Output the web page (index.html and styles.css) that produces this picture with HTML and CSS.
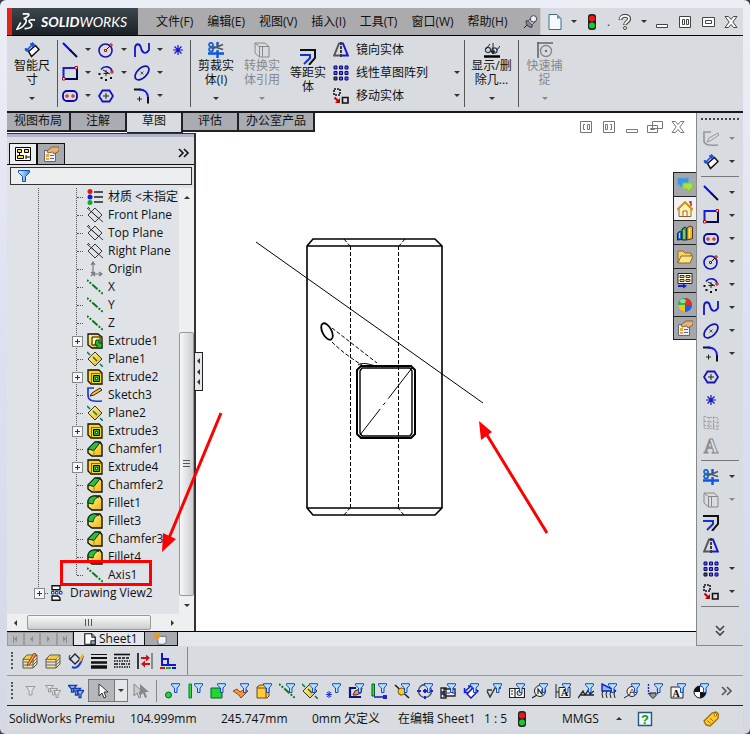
FILE: index.html
```html
<!DOCTYPE html>
<html lang="zh-CN">
<head>
<meta charset="utf-8">
<title>SolidWorks</title>
<link rel="stylesheet" href="styles.css">
</head>
<body>
<svg class="paints" aria-hidden="true">
<defs>
<linearGradient id="gy" x1="0" y1="0" x2="1" y2="1"><stop offset="0" stop-color="#fff7a8"/><stop offset="1" stop-color="#f2b400"/></linearGradient>
<linearGradient id="gb" x1="0" y1="0" x2="1" y2="0"><stop offset="0" stop-color="#e8f6ff"/><stop offset="1" stop-color="#2a86e0"/></linearGradient>
</defs>
</svg>
<svg class="sprite" aria-hidden="true">
<symbol id="dim" viewBox="0 0 16 16"><path d="M4.500 9.500l7-6 3.500 4-7.500 7z" fill="#fff" stroke="#111" stroke-width="1.500"/><path d="M2.500 8.500L9 2M1 6.500l2.500 3M8 .5L10.500 3M2 9l0-3M2 9l3-.5M9 2H6M9 2v3" stroke="#1b4fe0" stroke-width="1.600" fill="none"/></symbol>
<symbol id="line" viewBox="0 0 16 16"><path d="M1 1l8 8" stroke="#0505f0" stroke-width="2"/><path d="M8 8l7 7" stroke="#050540" stroke-width="2"/></symbol>
<symbol id="rect" viewBox="0 0 16 16"><path d="M1.500 13.500V3H14" fill="none" stroke="#1a1ae0" stroke-width="2"/><path d="M15 3v11H1.500" fill="none" stroke="#05054a" stroke-width="2"/><path d="M13 1.500h2.500v2.500h-2.500zM.5 12.500H3v2.500H.5z" fill="#fff" stroke="#c00"/></symbol>
<symbol id="slot" viewBox="0 0 16 16"><rect x="1" y="3" width="14" height="10" rx="4" fill="none" stroke="#0808a8" stroke-width="1.800"/><path d="M4 7h2v2H4zM10 7h2v2h-2z" fill="#fff" stroke="#c00"/></symbol>
<symbol id="circ" viewBox="0 0 16 16"><circle cx="7.500" cy="8.500" r="6.500" fill="none" stroke="#1414b8" stroke-width="1.600"/><path d="M8 8l5-5" stroke="#111"/><path d="M6.500 7.500h2v2h-2zM12 2h2v2h-2z" fill="#fff" stroke="#c00"/></symbol>
<symbol id="arc" viewBox="0 0 16 16"><path d="M3 4.500C6 .5 12.500 1 14 6" fill="none" stroke="#1414c8" stroke-width="1.600"/><path d="M13 6h2v2h-2z" fill="#fff" stroke="#c00"/><path d="M5 5l7 4M8 5v6M5.500 8.500h5" stroke="#222"/><path d="M.5 8h2v2h-2zM2.500 12h2v2h-2zM7 14h2v2H7zM12 12h2v2h-2z" fill="#111"/></symbol>
<symbol id="hex" viewBox="0 0 16 16"><path d="M4.500 2.500h7l3.500 5.500-3.500 5.500h-7L1 8z" fill="none" stroke="#1414b8" stroke-width="1.800"/><path d="M5 8h6M8 5v6" stroke="#222"/></symbol>
<symbol id="spl" viewBox="0 0 16 16"><path d="M1 15V6C1.500 1 6 1 7 6s5 7 8 2V1" fill="none" stroke="#1414c8" stroke-width="1.800"/></symbol>
<symbol id="ell" viewBox="0 0 16 16"><ellipse cx="8" cy="8" rx="8.500" ry="4.800" transform="rotate(-45 8 8)" fill="none" stroke="#1414a8" stroke-width="1.700"/><path d="M6.500 6.500l3 3M9.500 6.500l-3 3" stroke="#333" stroke-width=".8"/></symbol>
<symbol id="fil" viewBox="0 0 16 16"><path d="M0 1.500h7" stroke="#111" stroke-width="2"/><path d="M5 1.500c6 0 9 3 9 8" fill="none" stroke="#1414ff" stroke-width="1.800"/><path d="M14 9v6.500" stroke="#111" stroke-width="2"/><path d="M3 11h5M5.500 8.500v5" stroke="#222"/></symbol>
<symbol id="pt" viewBox="0 0 16 16"><path d="M8 3v10M3 8h10M4.500 4.500l7 7M11.500 4.500l-7 7" stroke="#1414c8" stroke-width="1.200"/></symbol>
<symbol id="trim" viewBox="0 0 16 16"><path d="M0 11.500h16M9.500 8v8M9.500 0v4" stroke="#0b55e8" stroke-width="2.400"/><path d="M5 4.500l10 3M5 6.500l10-4" stroke="#555" stroke-width="1.800"/><circle cx="3" cy="2.800" r="2" fill="none" stroke="#1c66cc" stroke-width="1.800"/><circle cx="3" cy="7.500" r="2" fill="none" stroke="#1c66cc" stroke-width="1.800"/></symbol>
<symbol id="conv" viewBox="0 0 16 16"><path d="M5.500 4.500h9.500V15H5.500zM5.500 4.500L1 1v10l4.500 4M1 1h10l4 3.500M8.500 4.500v10" fill="none" stroke="#888"/></symbol>
<symbol id="off" viewBox="0 0 16 16"><path d="M0 1h15v8l-6 7" fill="none" stroke="#111" stroke-width="2"/><path d="M0 6h10v3l-6 6" fill="none" stroke="#1432d8" stroke-width="2"/></symbol>
<symbol id="mir" viewBox="0 0 16 16"><path d="M7 1.500H6L1.200 13.500H7" fill="none" stroke="#555" stroke-width="2"/><path d="M9 1.500h1l4.800 12H9" fill="none" stroke="#1a1acc" stroke-width="2"/><path d="M8 0v16" stroke="#111" stroke-width="1.600" stroke-dasharray="3 1"/></symbol>
<symbol id="pat" viewBox="0 0 16 16"><path d="M1 1h3v3H1zM6.500 1h3v3h-3zM12 1h3v3h-3zM1 6.500h3v3H1zM6.500 6.500h3v3h-3zM12 6.500h3v3h-3zM6.500 12h3v3h-3zM12 12h3v3h-3z" fill="#5a5af8" stroke="#08087a"/><path d="M1 12h3v3H1z" fill="#555" stroke="#111"/></symbol>
<symbol id="move" viewBox="0 0 16 16"><path d="M1 1h6v6H1z" fill="none" stroke="#111" stroke-width="1.600" stroke-dasharray="2 1"/><path d="M9.500 9.500H15V15H9.500z" fill="#ddd" stroke="#111" stroke-width="1.600"/><path d="M1.500 9.500l4 4" stroke="#b00" stroke-width="2"/><path d="M7 10v5H2z" fill="#b00"/></symbol>
<symbol id="show" viewBox="0 0 16 16"><circle cx="4" cy="8" r="2.600" fill="none" stroke="#345" stroke-width="1.300"/><circle cx="10.500" cy="8.500" r="2.600" fill="none" stroke="#345" stroke-width="1.300"/><path d="M2 7l4-5M13 8l3-4M9 9V1M7 9l2 3 2-3z" fill="#222" stroke="#222"/><path d="M0 14.500h16" stroke="#000" stroke-width="2.500"/></symbol>
<symbol id="snap" viewBox="0 0 16 16"><path d="M0 1h16M1 0v16" stroke="#666" stroke-width="1.600"/><circle cx="9" cy="9" r="5.500" fill="none" stroke="#888" stroke-width="1.400"/><circle cx="9" cy="9" r="1.300" fill="#777"/></symbol>
<symbol id="pin" viewBox="0 0 16 16"><path d="M2 14l5-5" stroke="#222"/><path d="M4 7c2-1 7 2 6 6-3 1-6-2-6-6z" fill="#889" stroke="#334"/><path d="M6 7l3-3 4 4-3 3z" fill="#b8bcc8" stroke="#556"/><circle cx="11.500" cy="4.800" r="3.200" fill="#eceef4" stroke="#445"/></symbol>
<symbol id="doc" viewBox="0 0 16 16"><path d="M2 .5h8l4 4v11H2z" fill="#f4faff" stroke="#456a88"/><path d="M10 .5v4h4z" fill="#5f91b8"/></symbol>
<symbol id="light" viewBox="0 0 16 16"><rect x="4" y="0" width="8" height="16" rx="3" fill="#222"/><circle cx="8" cy="4.500" r="3" fill="#f11"/><circle cx="8" cy="11.500" r="3" fill="#1c3"/></symbol>
<symbol id="help" viewBox="0 0 16 16"><path d="M3.500 6c0-6 9.500-5 8.500-.5C11.500 8 8 8 8 11" fill="none" stroke="#444" stroke-width="4"/><path d="M3.500 5.500c0-5 9.500-4.500 8.500-.5C11.500 8 8 8 8 10.500" fill="none" stroke="#fff" stroke-width="1.900"/><circle cx="8" cy="14" r="1.500" fill="#fff" stroke="#444"/></symbol>
<symbol id="min" viewBox="0 0 16 16"><path d="M2.500 10.500h11v3h-11z" fill="#fff" stroke="currentColor"/></symbol>
<symbol id="cols" viewBox="0 0 16 16"><path d="M2.500 2.500h11v11h-11zM5.500 5.500h2v5h-2zM9.500 5.500h2v5h-2z" fill="#fff" stroke="currentColor"/></symbol>
<symbol id="max" viewBox="0 0 16 16"><path d="M2.500 3.500h12v9h-12zM5.500 6.500h6v3h-6z" fill="#fff" stroke="currentColor"/></symbol>
<symbol id="x" viewBox="0 0 16 16"><path d="M2 2.500h3.500L8 5.500l2.500-3H14L9.800 8l4.200 5.500h-3.500L8 10.500l-2.500 3H2L6.200 8z" fill="#fff" stroke="currentColor"/></symbol>
<symbol id="pl" viewBox="0 0 16 16"><path d="M2.500 2.500h11v11h-11z" fill="#fff" stroke="currentColor"/><path d="M7 5.500H5.500v5H7M9.500 5.500h2v5h-2z" fill="none" stroke="currentColor"/></symbol>
<symbol id="pr" viewBox="0 0 16 16"><path d="M2.500 2.500h11v11h-11z" fill="#fff" stroke="currentColor"/><path d="M4.500 5.500h2v5h-2zM9 5.500h1.500v5H9" fill="none" stroke="currentColor"/></symbol>
<symbol id="rest" viewBox="0 0 16 16"><path d="M5.500 2.500h10v7h-10zM.5 6.500h10v7H.5zM3.500 9.500h4v1h-4z" fill="#fff" stroke="currentColor"/></symbol>
<symbol id="fm" viewBox="0 0 16 16"><path d="M.5 1.500h15v13H.5z" fill="#fff" stroke="#000"/><path d="M2.500 3.500h4v3h-4zM9.500 3.500h4v3h-4zM2.500 9.500h6v3h-6z" fill="#fd2" stroke="#000"/><path d="M11 9v4M11 11h4M4.500 6v3" stroke="#000"/></symbol>
<symbol id="prop" viewBox="0 0 16 16"><path d="M1.500 4.500h11v11h-11z" fill="#eef" stroke="#667"/><path d="M3 8h3v3H3zM3 12h3v2H3z" fill="#e9a93c"/><path d="M7 9.500h4M7 12.500h4" stroke="#667"/><path d="M4 5l5-4h7v4l-5 3-1-2-5 1z" fill="#e5b176" stroke="#79501f" stroke-width=".8"/></symbol>
<symbol id="fun" viewBox="0 0 16 16"><path d="M2.500 2.500h11v2L9.500 8.500v5h-3v-5L2.500 4.500z" fill="url(#gb)" stroke="#1550b8"/></symbol>
<symbol id="mat" viewBox="0 0 16 16"><path d="M7 3h9M7 8h9M7 13h9" stroke="#222" stroke-width="1.600"/><circle cx="3" cy="2.500" r="2.500" fill="#e11"/><circle cx="3" cy="8" r="2.500" fill="#12c"/><circle cx="3" cy="13.500" r="2.500" fill="#1a2"/></symbol>
<symbol id="plane" viewBox="0 0 16 16"><path d="M8 1l7 7-7 7-7-7zM0 1l16 14M5 5l6 6M1 0l2 2" fill="none" stroke="#222" stroke-width=".9"/></symbol>
<symbol id="orig" viewBox="0 0 16 16"><path d="M6 2v11h9M4 11l4 4M8 11l-4 4M4 4l2-3 2 3M12 11l3 2-3 2" fill="none" stroke="#777" stroke-width="1.200"/></symbol>
<symbol id="axis" viewBox="0 0 16 16"><path d="M0 1l16 14" stroke="#087a18" stroke-width="2" stroke-dasharray="2 1.500 2 1.500 7 1.500"/></symbol>
<symbol id="exa" viewBox="0 0 16 16"><path d="M1 1h10l4 3v11H5L1 12z" fill="url(#gy)" stroke="#110" stroke-width="1.300"/><path d="M5 4h8v8H5z" fill="#fff7a0" stroke="#110"/><path d="M9 7h3v3h3v5h-5v-3H8z" fill="#2db82d" stroke="#042"/></symbol>
<symbol id="exb" viewBox="0 0 16 16"><path d="M1 1h11l3 3v11H4l-3-3z" fill="#ffd21f" stroke="#110" stroke-width="1.300"/><path d="M4 4.500h10.500M4.500 4v10.500" stroke="#8a6400"/><path d="M6.500 6.500h6v6h-6z" fill="#2ab02a" stroke="#000"/><path d="M8.500 8.500h2v2h-2z" fill="#fff" stroke="#000" stroke-width=".6"/></symbol>
<symbol id="yp" viewBox="0 0 16 16"><path d="M8 1l7 7-7 7-7-7z" fill="url(#gy)" stroke="#333"/><path d="M0 1l3 3M6 6l4 4M13 13l3 3" stroke="#075" stroke-width="1.500"/></symbol>
<symbol id="sk" viewBox="0 0 16 16"><path d="M7 1H1v7c0 5 3 7 14 6" fill="none" stroke="#2038d8" stroke-width="1.700"/><path d="M3 9l2-3 8-5 2 2-8 5z" fill="#ffc23a" stroke="#320"/></symbol>
<symbol id="cham" viewBox="0 0 16 16"><path d="M1 8l7-7h5l2 3v11H5L1 12z" fill="url(#gy)" stroke="#110" stroke-width="1.400"/><path d="M1 8l7-7 5 .5-6 8z" fill="#35b93b" stroke="#031"/><path d="M7 9v6" stroke="#a80"/></symbol>
<symbol id="fill" viewBox="0 0 16 16"><path d="M1 8c0-5 3-7 7-7h5l2 3v11H5L1 12z" fill="url(#gy)" stroke="#110" stroke-width="1.400"/><path d="M1 8c0-5 3-7 7-7l4 1c-4 1-5 3-6 7z" fill="#35b93b" stroke="#031"/></symbol>
<symbol id="view" viewBox="0 0 16 16"><path d="M1 .7h8v4H1zM1 11h6l2 2v2.300H1z" fill="#fff" stroke="#111" stroke-width="1.400"/><path d="M.5 6.500h2.500v2.500H.5zM4.500 6.500H7V9H4.500zM8.500 6.500H11V9H8.500z" fill="#dfe8ff" stroke="#223a99"/></symbol>
<symbol id="sheet" viewBox="0 0 16 16"><path d="M2 2h8l4 4v8H2z" fill="#fff" stroke="#111" stroke-width="1.300"/><path d="M10 2v4h4M9 10h5v4H9z" fill="#9ab" stroke="#111"/></symbol>
<symbol id="add" viewBox="0 0 16 16"><path d="M5 5h10v7l-3 2H6z" fill="#eef3fb" stroke="#567"/><path d="M4.500 0v9M0 4.500h9M1.500 1.500l6 6M7.500 1.500l-6 6" stroke="#f19a10" stroke-width="1.400"/></symbol>
<symbol id="lay" viewBox="0 0 16 16"><path d="M1 6l4-4h10l-4 4zM1 6h10v9H1zM11 6l4-4v9l-4 4" fill="#efe1a6" stroke="#5d5640"/><path d="M1 9h10l4-4M1 12h10l4-4" fill="none" stroke="#5d6a88"/><path d="M2 6h9l3-3H5z" fill="#f7c641"/></symbol>
<symbol id="layp" viewBox="0 0 16 16"><use href="#lay"/><path d="M5 13l1-3 6-10 2 1-6 10z" fill="#f7b52a" stroke="#a33"/></symbol>
<symbol id="bucket" viewBox="0 0 16 16"><path d="M2 6l5-5 5 5-5 5z" fill="#dde" stroke="#223" stroke-width="1.400"/><path d="M2 2c-2 3 0 6 1 5" fill="none" stroke="#224"/><path d="M4 14c4 2 7-1 9-5l2-6" fill="none" stroke="#1a3fc0" stroke-width="2"/><path d="M11 7l3-6 2 1-3 7z" fill="#f7b52a"/></symbol>
<symbol id="lw" viewBox="0 0 16 16"><path d="M0 1.500h16" stroke="#111"/><path d="M0 5h16" stroke="#111" stroke-width="2"/><path d="M0 9.500h16" stroke="#111" stroke-width="2.500"/><path d="M0 14h16" stroke="#111" stroke-width="3.500"/></symbol>
<symbol id="ls" viewBox="0 0 16 16"><path d="M0 1.500h16" stroke="#111" stroke-width="1.600"/><path d="M0 5h16" stroke="#111" stroke-width="1.600" stroke-dasharray="3 1"/><path d="M0 8h16M0 14h16" stroke="#111" stroke-width="1.600" stroke-dasharray="1.500 1"/><path d="M0 11h16" stroke="#111" stroke-width="1.600" stroke-dasharray="4 1 1 1"/></symbol>
<symbol id="hide" viewBox="0 0 16 16"><path d="M1 0v16" stroke="#111" stroke-width="1.600"/><path d="M15 0v16" stroke="#777" stroke-width="1.600"/><path d="M4 5h6M6 11h7" stroke="#c11" stroke-width="2"/><path d="M9 1.500v7l4-3.500zM8 7.500v7l-4-3.500z" fill="#c11"/></symbol>
<symbol id="al" viewBox="0 0 16 16"><path d="M2 0v12h14M2 6h6v6" fill="none" stroke="#1414c8" stroke-width="2"/><path d="M0 15h5" stroke="#d11" stroke-width="2"/><path d="M6 15h5" stroke="#1a2" stroke-width="2"/><path d="M12 15h4" stroke="#11d" stroke-width="2"/></symbol>
<symbol id="gf" viewBox="0 0 16 16"><path d="M4 3.500h9l-3 4V12H7V7.500z" fill="#e2e4e8" stroke="#999"/></symbol>
<symbol id="gf3" viewBox="0 0 16 16"><path d="M.5 2.500h8l-3 3.500v3h-2V6zM4.500 5.500h8l-3 3.500v3h-2V9zM8.500 7.500H16L13 11v3.500h-2V11z" fill="#e2e4e8" stroke="#999"/></symbol>
<symbol id="bf3" viewBox="0 0 16 16"><path d="M.5 2.500h8l-3 3.500v3h-2V6zM4.500 5.500h8l-3 3.500v3h-2V9zM8.500 7.500H16L13 11v3.500h-2V11z" fill="#9fd4ff" stroke="#1a3faa" stroke-width="1.300"/></symbol>
<symbol id="cur" viewBox="0 0 16 16"><path d="M5 1v12l3-3 2 5 2-1-2-5h4z" fill="#fff" stroke="#333"/></symbol>
<symbol id="cur2" viewBox="0 0 16 16"><path d="M1 1v12l3-3 2 5 2-1-2-5h4z" fill="#ccc" stroke="#888"/><path d="M7 1v12l3-3 2 5 2-1-2-5h4z" fill="#888"/></symbol>
<symbol id="f" viewBox="0 0 16 16"><path d="M7.500.7h8v1.500L13 5v4.500h-2.500V5L7.500 2.200z" fill="#b5e2ff" stroke="#1a48b8"/></symbol>
<symbol id="t1" viewBox="0 0 16 16"><circle cx="4.500" cy="12" r="3" fill="#2fd02f" stroke="#063"/><use href="#f"/></symbol>
<symbol id="t2" viewBox="0 0 16 16"><path d="M2 1h2.500v14H2z" fill="#2fe02f" stroke="#074"/><use href="#f"/></symbol>
<symbol id="t3" viewBox="0 0 16 16"><path d="M1 5h11v10H1z" fill="#1fd82f" stroke="#063"/><use href="#f"/></symbol>
<symbol id="t4" viewBox="0 0 16 16"><path d="M0 8l4-2 3 3 5-3 3 2-7 7-2-3z" fill="#f79a20" stroke="#943"/><use href="#f"/></symbol>
<symbol id="t5" viewBox="0 0 16 16"><path d="M1 4l3-2h9v11l-2 2H1z" fill="#ffcd30" stroke="#742"/><path d="M1 5h9v10" fill="none" stroke="#742"/><use href="#f"/></symbol>
<symbol id="t6" viewBox="0 0 16 16"><use href="#axis"/><use href="#f"/></symbol>
<symbol id="t7" viewBox="0 0 16 16"><use href="#yp"/><use href="#f"/></symbol>
<symbol id="t8" viewBox="0 0 16 16"><path d="M4 8v7M1 11.500h6M2 9l4 5M6 9l-4 5" stroke="#23d"/><use href="#f"/></symbol>
<symbol id="t9" viewBox="0 0 16 16"><path d="M8 5H2v9h11" fill="none" stroke="#118" stroke-width="2.200"/><path d="M5 12l2-4 7-3-1 5-5 2z" fill="#e8a030" stroke="#521"/><use href="#f"/></symbol>
<symbol id="t10" viewBox="0 0 16 16"><path d="M1 1h2.500v12H1z" fill="#2e3" stroke="#052"/><path d="M3 14h9" stroke="#22c" stroke-width="1.600"/><path d="M12 12h4v4h-4z" fill="#22c"/><use href="#f"/></symbol>
<symbol id="t11" viewBox="0 0 16 16"><path d="M1 2l14 13M6 12l6-6" stroke="#222" stroke-width="1.700"/><circle cx="7.500" cy="8.500" r="3.500" fill="#ffc72c" stroke="#750"/><use href="#f"/></symbol>
<symbol id="t12" viewBox="0 0 16 16"><circle cx="8" cy="8" r="6.500" fill="none" stroke="#445" stroke-width="1.300"/><path d="M0 8h4M6 8h4M12 8h4M8 0v3M8 6v4M8 13v3" stroke="#22c" stroke-width="2"/><use href="#f"/></symbol>
<symbol id="t13" viewBox="0 0 16 16"><path d="M4 6h11v7H4zM1 5h5v4H1zM1 11h5v4H1z" fill="#f4f4f4" stroke="#222" stroke-width="1.300"/><path d="M0 10h16" stroke="#22c" stroke-dasharray="4 2"/><use href="#f"/></symbol>
<symbol id="t14" viewBox="0 0 16 16"><path d="M4 11l6-6 5 3-7 7z" fill="#fff" stroke="#1616a8" stroke-width="1.400"/><path d="M1 9l7-6M1.500 5v4.500H6M5 3h4v3" stroke="#12d" stroke-width="1.500" fill="none"/><use href="#f"/></symbol>
<symbol id="t15" viewBox="0 0 16 16"><path d="M1 7h5M1 8l3 6 5-9h6" fill="none" stroke="#333" stroke-width="1.400"/><use href="#f"/></symbol>
<symbol id="t16" viewBox="0 0 16 16"><path d="M.5 5.500h15v9H.5zM6 5v9M2 8h2M2 11h2" fill="#fff" stroke="#222" stroke-width="1.200"/><circle cx="10.500" cy="10" r="2.500" fill="#ddd" stroke="#222"/><use href="#f"/></symbol>
<symbol id="t17" viewBox="0 0 16 16"><circle cx="8" cy="8" r="5.500" fill="#eee" stroke="#222"/><path d="M0 15l5-3M6 11V6l4 5V6" stroke="#222" fill="none" stroke-width="1.200"/><use href="#f"/></symbol>
<symbol id="t18" viewBox="0 0 16 16"><path d="M1 1v14M4 4.500h11v10H4zM1 9h3" fill="#eee" stroke="#222"/><text x="9.500" y="13" font-size="10" text-anchor="middle" font-family="Liberation Serif" font-weight="bold">A</text><use href="#f"/></symbol>
<symbol id="t19" viewBox="0 0 16 16"><path d="M0 15l5-7 2 4 4-6 1 5 4-3M3 12h13" stroke="#222" fill="none" stroke-width="1.300"/><use href="#f"/></symbol>
<symbol id="t20" viewBox="0 0 16 16"><path d="M1 1v7h14z" fill="#8bf" stroke="#12b" stroke-width="1.400"/><path d="M2 8l-1 3 1 4M6 8l-1 3 1 4M10 8l-1 3 1 4M14 8l-1 3 1 4" stroke="#222" fill="none"/><use href="#f"/></symbol>
<symbol id="t21" viewBox="0 0 16 16"><circle cx="8" cy="8.500" r="5" fill="#eee" stroke="#222"/><path d="M0 15l5-3" stroke="#222"/><text x="8" y="12" font-size="9" text-anchor="middle" font-family="Liberation Sans">A</text><use href="#f"/></symbol>
<symbol id="t22" viewBox="0 0 16 16"><path d="M1.500 1v9.500h9V5" fill="none" stroke="#22d" stroke-width="1.400" stroke-dasharray="2 1"/><path d="M3 10h6v2.500L6 15.500 3 12.500z" fill="#999" stroke="#222"/><use href="#f"/></symbol>
<symbol id="t23" viewBox="0 0 16 16"><path d="M1 4h12v11H1z" fill="#f4f4f4" stroke="#222"/><text x="6" y="14" font-size="10" text-anchor="middle" font-family="Liberation Serif" font-weight="bold">A</text><use href="#f"/></symbol>
<symbol id="t24" viewBox="0 0 16 16"><circle cx="7" cy="9" r="6" fill="#fff" stroke="#111"/><path d="M7 9V3a6 6 0 0 0-6 6zM7 9v6a6 6 0 0 0 6-6z" fill="#111"/><use href="#f"/></symbol>
<symbol id="chat" viewBox="0 0 16 16"><path d="M.5 1h11v7H6l-3 3V8H.5z" fill="#3c96e0" stroke="#5aa8e8"/><path d="M6 6h9.500v6H13v3l-3-3H6z" fill="#a6e24a" stroke="#8cc43c"/></symbol>
<symbol id="home" viewBox="0 0 16 16"><path d="M2 8l6-6 6 6v7.500H2z" fill="#fff3b0" stroke="#864"/><path d="M0 9l8-8 8 8" fill="none" stroke="#d8941c" stroke-width="2"/><path d="M6 10h4v5.500H6z" fill="#fff" stroke="#a52"/><path d="M12 1h2v4" fill="none" stroke="#b22" stroke-width="1.500"/></symbol>
<symbol id="books" viewBox="0 0 16 16"><path d="M.5 8l3-2 1 1v7.500l-4 .5z" fill="#2a6fd0" stroke="#124"/><path d="M5 4l3-2 1.500 1v12H5z" fill="#2aa84a" stroke="#132"/><path d="M10 3l3-2 2.500 1v11.500l-5.500 1.500z" fill="#f4b92c" stroke="#532"/><path d="M2.500 8v5M7 5v9M12.500 4v9" stroke="#fff" opacity=".7"/></symbol>
<symbol id="fold" viewBox="0 0 16 16"><path d="M1 14V2h5l2 2h6v3" fill="#fbd56a" stroke="#96671a"/><path d="M1 14l3-7h12l-3 7z" fill="#ffe48e" stroke="#96671a"/></symbol>
<symbol id="pal" viewBox="0 0 16 16"><path d="M1 .5h14v10H1z" fill="#fff" stroke="#222"/><path d="M3 2.500h4v2H3zM9 2.500h4v2H9zM3 6.500h4v2H3zM9 6.500h4v2H9z" fill="#fd4" stroke="#334"/><path d="M1 13h6" stroke="#12c" stroke-width="2"/><path d="M6 10.500l4 2.500-4 2.500z" fill="#12c"/></symbol>
<symbol id="ball" viewBox="0 0 16 16"><circle cx="8" cy="8" r="7" fill="#2060d8"/><path d="M8 8V1a7 7 0 0 0-7 7z" fill="#28b848"/><path d="M8 8V1a7 7 0 0 1 7 7z" fill="#e83020"/><path d="M8 8H1a7 7 0 0 0 7 7z" fill="#f8c020"/><ellipse cx="6" cy="4" rx="3" ry="2" fill="#fff" opacity=".5"/></symbol>
<symbol id="gsk" viewBox="0 0 16 16"><path d="M8 1H1v9c0 3 3 5 14 4" fill="none" stroke="#999" stroke-width="1.700"/><path d="M4 11l2-4 9-5 1 2-9 6z" fill="#d8dbe0" stroke="#999"/></symbol>
<symbol id="grid" viewBox="0 0 16 16"><path d="M1 1c5 3 9 0 14 2v12c-5-3-9 0-14-2zM6 2v12M10.500 2v12M1 6c5 2 9 0 14 1.500M1 10c5 2 9 0 14 1.500" fill="none" stroke="#999" stroke-dasharray="2 1"/></symbol>
<symbol id="txt" viewBox="0 0 16 16"><text x="8" y="15" font-size="20" text-anchor="middle" font-family="Liberation Serif" font-weight="bold" fill="#e4e6ea" stroke="#888">A</text></symbol>
<symbol id="chev" viewBox="0 0 16 16"><path d="M3 4l4 4-4 4M8 4l4 4-4 4" fill="none" stroke="currentColor" stroke-width="1.600"/></symbol>
<symbol id="q" viewBox="0 0 16 16"><path d="M1.500 1.500h13v13h-13z" fill="#eef6ff" stroke="#235a78" stroke-width="1.400"/><text x="8" y="13" font-size="13" text-anchor="middle" font-family="Liberation Sans" font-weight="bold" fill="#0a9a18">?</text></symbol>
<symbol id="tag" viewBox="0 0 16 16"><path d="M1 10l8-8 4-1 2.500 2-.5 4.500-8 7.500-4-1z" fill="#ffc82e" stroke="#a06a08" stroke-width="1.300"/><circle cx="12.500" cy="4" r="1.300" fill="#fff" stroke="#a06a08"/><path d="M4.500 9.500l3 3M7 7l3 3" stroke="#a06a08"/></symbol>
</svg>

<div class="window">
<header class="title">
  <div class="logo">
    <svg class="ds" viewBox="0 0 21 20" aria-hidden="true"><path d="M7 1.500h6c2 1-2 4-5 5 4 0 3 4 1 6-2 3-6 5-8 5l4-7M20 8c-4-1-7 0-6 2 1 1 4 2 2 5-2 2-5 2-7 2" fill="none" stroke="#fff" stroke-width="1.700"/></svg>
    <span class="brand"><b>SOLID</b>WORKS</span>
  </div>
  <nav class="menu">
    <a href="#">文件(F)</a><a href="#">编辑(E)</a><a href="#">视图(V)</a><a href="#">插入(I)</a><a href="#">工具(T)</a><a href="#">窗口(W)</a><a href="#">帮助(H)</a>
    <button class="b" aria-label="固定"><svg class="i"><use href="#pin"/></svg></button>
  </nav>
  <div class="quick">
    <button class="b" aria-label="新建"><svg class="i"><use href="#doc"/></svg><i class="dn"></i></button>
    <button class="b" aria-label="重建"><svg class="i"><use href="#light"/></svg></button>
    <span class="dot">.</span>
    <button class="b" aria-label="帮助"><svg class="i"><use href="#help"/></svg><i class="dn"></i></button>
  </div>
  <div class="winbtns">
    <button class="b" aria-label="最小化"><svg class="i"><use href="#min"/></svg></button>
    <button class="b" aria-label="平铺"><svg class="i"><use href="#cols"/></svg></button>
    <button class="b" aria-label="还原"><svg class="i"><use href="#max"/></svg></button>
    <button class="b" aria-label="关闭"><svg class="i"><use href="#x"/></svg></button>
  </div>
</header>

<section class="ribbon">
  <button class="big first"><svg class="i"><use href="#dim"/></svg><span>智能尺<br>寸</span><i class="dn"></i></button>
  <div class="tools">
    <button class="tool" aria-label="直线"><svg class="i"><use href="#line"/></svg><i class="dn"></i></button>
    <button class="tool" aria-label="圆"><svg class="i"><use href="#circ"/></svg><i class="dn"></i></button>
    <button class="tool" aria-label="样条曲线"><svg class="i"><use href="#spl"/></svg><i class="dn"></i></button>
    <button class="tool" aria-label="点"><svg class="i"><use href="#pt"/></svg></button>
    <button class="tool" aria-label="矩形"><svg class="i"><use href="#rect"/></svg><i class="dn"></i></button>
    <button class="tool" aria-label="圆弧"><svg class="i"><use href="#arc"/></svg><i class="dn"></i></button>
    <button class="tool" aria-label="椭圆"><svg class="i"><use href="#ell"/></svg><i class="dn"></i></button>
    <span></span>
    <button class="tool" aria-label="槽口"><svg class="i"><use href="#slot"/></svg><i class="dn"></i></button>
    <button class="tool" aria-label="多边形"><svg class="i"><use href="#hex"/></svg></button>
    <button class="tool" aria-label="圆角"><svg class="i"><use href="#fil"/></svg><i class="dn"></i></button>
  </div>
  <div class="group">
    <button class="big"><svg class="i"><use href="#trim"/></svg><span>剪裁实<br>体(I)</span><i class="dn"></i></button>
    <button class="big off"><svg class="i"><use href="#conv"/></svg><span>转换实<br>体引用</span><i class="dn"></i></button>
    <button class="big mid"><svg class="i"><use href="#off"/></svg><span>等距实<br>体</span></button>
    <div class="list">
      <button class="item"><svg class="i"><use href="#mir"/></svg><span>镜向实体</span></button>
      <button class="item"><svg class="i"><use href="#pat"/></svg><span>线性草图阵列</span><i class="dn"></i></button>
      <button class="item"><svg class="i"><use href="#move"/></svg><span>移动实体</span><i class="dn"></i></button>
    </div>
  </div>
  <button class="big show"><svg class="i"><use href="#show"/></svg><span>显示/删<br>除几...</span><i class="dn"></i></button>
  <button class="big off"><svg class="i"><use href="#snap"/></svg><span>快速捕<br>捉</span><i class="dn"></i></button>
</section>

<div class="main">
  <div class="work">
    <div class="tabrow">
      <nav class="tabs"><a href="#">视图布局</a><a href="#">注解</a><a href="#" class="on">草图</a><a href="#">评估</a><a href="#">办公室产品</a></nav>
      <div class="mdi">
        <button class="b" aria-label="左窗格"><svg class="i"><use href="#pl"/></svg></button>
        <button class="b" aria-label="右窗格"><svg class="i"><use href="#pr"/></svg></button>
        <button class="b" aria-label="最小化图纸"><svg class="i"><use href="#min"/></svg></button>
        <button class="b" aria-label="还原图纸"><svg class="i"><use href="#rest"/></svg></button>
        <button class="b" aria-label="关闭图纸"><svg class="i"><use href="#x"/></svg></button>
      </div>
    </div>
    <div class="view">
      <aside class="panel">
        <div class="ptabs">
          <button class="ptab on" aria-label="特征树"><svg class="i"><use href="#fm"/></svg></button>
          <button class="ptab" aria-label="属性"><svg class="i"><use href="#prop"/></svg></button>
          <svg class="i more"><use href="#chev"/></svg>
        </div>
        <label class="filter"><svg class="i"><use href="#fun"/></svg><input type="text" aria-label="过滤"></label>
        <div class="treebox">
          <div class="tree">
            <ul class="kids">
              <li><svg class="i"><use href="#mat"/></svg>材质 &lt;未指定</li>
              <li><svg class="i"><use href="#plane"/></svg>Front Plane</li>
              <li><svg class="i"><use href="#plane"/></svg>Top Plane</li>
              <li><svg class="i"><use href="#plane"/></svg>Right Plane</li>
              <li><svg class="i"><use href="#orig"/></svg>Origin</li>
              <li><svg class="i"><use href="#axis"/></svg>X</li>
              <li><svg class="i"><use href="#axis"/></svg>Y</li>
              <li><svg class="i"><use href="#axis"/></svg>Z</li>
              <li class="plus"><svg class="i"><use href="#exa"/></svg>Extrude1</li>
              <li><svg class="i"><use href="#yp"/></svg>Plane1</li>
              <li class="plus"><svg class="i"><use href="#exb"/></svg>Extrude2</li>
              <li><svg class="i"><use href="#sk"/></svg>Sketch3</li>
              <li><svg class="i"><use href="#yp"/></svg>Plane2</li>
              <li class="plus"><svg class="i"><use href="#exb"/></svg>Extrude3</li>
              <li><svg class="i"><use href="#cham"/></svg>Chamfer1</li>
              <li class="plus"><svg class="i"><use href="#exb"/></svg>Extrude4</li>
              <li><svg class="i"><use href="#cham"/></svg>Chamfer2</li>
              <li><svg class="i"><use href="#fill"/></svg>Fillet1</li>
              <li><svg class="i"><use href="#fill"/></svg>Fillet3</li>
              <li><svg class="i"><use href="#cham"/></svg>Chamfer3</li>
              <li><svg class="i"><use href="#fill"/></svg>Fillet4</li>
              <li><svg class="i"><use href="#axis"/></svg>Axis1</li>
            </ul>
            <div class="root plus"><svg class="i"><use href="#view"/></svg>Drawing View2</div>
          </div>
          <div class="vbar"><i class="up"></i><div class="vthumb"><i class="grip"></i></div><i class="dn"></i></div>
        </div>
        <div class="hbar"><i class="lt"></i><div class="hthumb"><i class="grip v"></i></div><i class="rt"></i></div>
        <div class="handle"><i class="lt"></i><i class="lt"></i><i class="lt"></i></div>
      </aside>
      <div class="canvas">
        <svg class="drawing" viewBox="196 133 477 498" preserveAspectRatio="xMinYMin meet" fill="none" stroke="#000">
          <path d="M307 246l6-7h122l7 7v262l-7 7H313l-6-7zM307 246h135M307 508h135" stroke-width="1.600"/>
          <path d="M350.500 246v262M398.500 246v262" stroke-dasharray="4 2"/>
          <path d="M344 239l6 7M405 239l-6 7M344 515l6-7M404 515l-6-7" stroke-dasharray="4 2"/>
          <path d="M256 242l227 161" stroke-width="1"/>
          <ellipse cx="327" cy="331.500" rx="4.500" ry="9" transform="rotate(-28 327 331.500)" stroke-width="1.800"/>
          <path d="M332 328l45 35M332 342c9 9 20 17 30 23" stroke-dasharray="4 2"/>
          <path d="M357 370l4-4h50l4 4v64l-4 4h-50l-4-4z" stroke-width="2"/>
          <path d="M360 371l2-3h48l2 3v62l-2 3h-48l-2-3z" stroke-width="1.400"/>
          <path d="M358 365c5-3 10-1 18 1"/>
          <path d="M360 435l52-67" stroke-dasharray="33 5 3 5 40"/>
        </svg>
        <div class="tasks">
          <button aria-label="资源"><svg class="i"><use href="#chat"/></svg></button>
          <button class="on" aria-label="主页"><svg class="i"><use href="#home"/></svg></button>
          <button aria-label="设计库"><svg class="i"><use href="#books"/></svg></button>
          <button aria-label="文件探索器"><svg class="i"><use href="#fold"/></svg></button>
          <button aria-label="视图调色板"><svg class="i"><use href="#pal"/></svg></button>
          <button aria-label="外观"><svg class="i"><use href="#ball"/></svg></button>
          <button aria-label="自定义属性"><svg class="i"><use href="#prop"/></svg></button>
        </div>
      </div>
      <svg class="marks" viewBox="7 133 600 498" aria-hidden="true"><rect x="61.500" y="561.500" width="89" height="23" fill="none" stroke="red" stroke-width="3"/><path d="M221 413l-52 125M547 533l-60-98" stroke="red" stroke-width="3"/><path d="M162 552l1-19 13 6zM479 421l2 19 11-8z" fill="red"/></svg>
    </div>
    <div class="sheets">
      <div class="navs"><button aria-label="首张"><i class="bar"></i><i class="lt"></i></button><button aria-label="上一张"><i class="lt"></i></button><button aria-label="下一张"><i class="rt"></i></button><button aria-label="末张"><i class="rt"></i><i class="bar"></i></button></div>
      <a href="#" class="sheet on"><svg class="i"><use href="#sheet"/></svg>Sheet1</a>
      <button class="sheet" aria-label="添加图纸"><svg class="i"><use href="#add"/></svg></button>
    </div>
  </div>
  <aside class="side">
    <div class="sgroup">
      <button class="tool" aria-label="草图绘制"><svg class="i"><use href="#gsk"/></svg><i class="dn pale"></i></button>
      <button class="tool" aria-label="智能尺寸"><svg class="i"><use href="#dim"/></svg><i class="dn"></i></button>
    </div>
    <div class="sgroup">
      <button class="tool" aria-label="直线"><svg class="i"><use href="#line"/></svg><i class="dn"></i></button>
      <button class="tool" aria-label="矩形"><svg class="i"><use href="#rect"/></svg><i class="dn"></i></button>
      <button class="tool" aria-label="槽口"><svg class="i"><use href="#slot"/></svg><i class="dn"></i></button>
      <button class="tool" aria-label="圆"><svg class="i"><use href="#circ"/></svg><i class="dn"></i></button>
      <button class="tool" aria-label="圆弧"><svg class="i"><use href="#arc"/></svg><i class="dn"></i></button>
      <button class="tool" aria-label="样条曲线"><svg class="i"><use href="#spl"/></svg><i class="dn"></i></button>
      <button class="tool" aria-label="椭圆"><svg class="i"><use href="#ell"/></svg><i class="dn"></i></button>
      <button class="tool" aria-label="圆角"><svg class="i"><use href="#fil"/></svg><i class="dn"></i></button>
      <button class="tool" aria-label="多边形"><svg class="i"><use href="#hex"/></svg></button>
      <button class="tool" aria-label="点"><svg class="i"><use href="#pt"/></svg></button>
      <button class="tool" aria-label="基准面"><svg class="i"><use href="#grid"/></svg></button>
      <button class="tool" aria-label="文字"><svg class="i"><use href="#txt"/></svg></button>
    </div>
    <div class="sgroup">
      <button class="tool" aria-label="剪裁"><svg class="i"><use href="#trim"/></svg><i class="dn"></i></button>
      <button class="tool" aria-label="转换"><svg class="i"><use href="#conv"/></svg><i class="dn pale"></i></button>
      <button class="tool" aria-label="等距"><svg class="i"><use href="#off"/></svg></button>
      <button class="tool" aria-label="镜向"><svg class="i"><use href="#mir"/></svg></button>
      <button class="tool" aria-label="阵列"><svg class="i"><use href="#pat"/></svg><i class="dn"></i></button>
      <button class="tool" aria-label="移动"><svg class="i"><use href="#move"/></svg><i class="dn"></i></button>
    </div>
    <button class="b expand" aria-label="更多"><svg class="i"><use href="#chev"/></svg></button>
  </aside>
</div>

<div class="bar1">
  <button class="b" aria-label="图层属性"><svg class="i"><use href="#layp"/></svg></button>
  <button class="b" aria-label="图层"><svg class="i"><use href="#lay"/></svg></button>
  <button class="b" aria-label="线色"><svg class="i"><use href="#bucket"/></svg></button>
  <button class="b" aria-label="线粗"><svg class="i"><use href="#lw"/></svg></button>
  <button class="b" aria-label="线型"><svg class="i"><use href="#ls"/></svg></button>
  <button class="b" aria-label="隐藏边线"><svg class="i"><use href="#hide"/></svg></button>
  <button class="b" aria-label="颜色显示"><svg class="i"><use href="#al"/></svg></button>
  <i class="sep end"></i>
</div>
<div class="bar1 bar2">
  <button class="b" aria-label="过滤器"><svg class="i"><use href="#gf"/></svg></button>
  <button class="b" aria-label="清除过滤器"><svg class="i"><use href="#gf3"/></svg></button>
  <button class="b" aria-label="全部过滤器"><svg class="i"><use href="#bf3"/></svg></button>
  <div class="pick"><button aria-label="选择"><svg class="i"><use href="#cur"/></svg></button><button aria-label="选择方式"><i class="dn"></i></button></div>
  <button class="b" aria-label="反向选择"><svg class="i"><use href="#cur2"/></svg></button>
  <i class="sep"></i>
  <button class="b" aria-label="过滤顶点"><svg class="i"><use href="#t1"/></svg></button>
  <button class="b" aria-label="过滤边线"><svg class="i"><use href="#t2"/></svg></button>
  <button class="b" aria-label="过滤面"><svg class="i"><use href="#t3"/></svg></button>
  <button class="b" aria-label="过滤曲面"><svg class="i"><use href="#t4"/></svg></button>
  <button class="b" aria-label="过滤实体"><svg class="i"><use href="#t5"/></svg></button>
  <button class="b" aria-label="过滤基准轴"><svg class="i"><use href="#t6"/></svg></button>
  <button class="b" aria-label="过滤基准面"><svg class="i"><use href="#t7"/></svg></button>
  <button class="b" aria-label="过滤草图点"><svg class="i"><use href="#t8"/></svg></button>
  <button class="b" aria-label="过滤草图"><svg class="i"><use href="#t9"/></svg></button>
  <button class="b" aria-label="过滤草图线段"><svg class="i"><use href="#t10"/></svg></button>
  <button class="b" aria-label="过滤中点"><svg class="i"><use href="#t11"/></svg></button>
  <button class="b" aria-label="过滤中心符号线"><svg class="i"><use href="#t12"/></svg></button>
  <button class="b" aria-label="过滤中心线"><svg class="i"><use href="#t13"/></svg></button>
  <button class="b" aria-label="过滤尺寸"><svg class="i"><use href="#t14"/></svg></button>
  <button class="b" aria-label="过滤表面粗糙度"><svg class="i"><use href="#t15"/></svg></button>
  <button class="b" aria-label="过滤形位公差"><svg class="i"><use href="#t16"/></svg></button>
  <button class="b" aria-label="过滤注释"><svg class="i"><use href="#t17"/></svg></button>
  <button class="b" aria-label="过滤基准特征"><svg class="i"><use href="#t18"/></svg></button>
  <button class="b" aria-label="过滤焊接符号"><svg class="i"><use href="#t19"/></svg></button>
  <button class="b" aria-label="过滤焊缝"><svg class="i"><use href="#t20"/></svg></button>
  <button class="b" aria-label="过滤基准目标"><svg class="i"><use href="#t21"/></svg></button>
  <button class="b" aria-label="过滤装饰螺纹线"><svg class="i"><use href="#t22"/></svg></button>
  <button class="b" aria-label="过滤块"><svg class="i"><use href="#t23"/></svg></button>
  <button class="b" aria-label="过滤销钉符号"><svg class="i"><use href="#t24"/></svg></button>
  <button class="b last" aria-label="更多过滤器"><svg class="i"><use href="#chev"/></svg></button>
</div>
<footer class="status">
  <span class="s1">SolidWorks Premiu</span>
  <span class="s2">104.999mm</span>
  <span class="s2">245.747mm</span>
  <span class="s3">0mm</span>
  <span class="s4">欠定义</span>
  <span class="s5">在编辑 Sheet1</span>
  <span class="s6">1 : 5</span>
  <svg class="i lamp"><use href="#light"/></svg>
  <span class="s7">MMGS</span>
  <i class="up"></i>
  <svg class="i ask"><use href="#q"/></svg>
  <svg class="i tag"><use href="#tag"/></svg>
</footer>
</div>
</body>
</html>
```

FILE: styles.css
```css
* { box-sizing: border-box; }
body {
  margin: 0;
  background: #3a4048;
  font: 12px/18px "Open Sans", "Noto Sans CJK SC", sans-serif;
  color: #111;
}
a { color: inherit; text-decoration: none; }
button { font: inherit; color: inherit; background: none; border: 0; padding: 0; margin: 0; }
ul { list-style: none; margin: 0; padding: 0; }
.sprite { display: none; }
.paints { position: absolute; width: 0; height: 0; }
.i { width: 16px; height: 16px; flex: none; display: block; }
.window {
  min-height: 100vh;
  padding: 8px 7px 3px;
  border-bottom: 1px solid #444a55;
  border-radius: 6px;
  background: linear-gradient(#eceef6, #dcdff0 50%, #d4d8e4);
}
.b { display: flex; align-items: center; gap: 8px; }

/* small arrows */
.dn, .up, .lt, .rt { width: 0; height: 0; flex: none; border: 3px solid transparent; }
.dn { border-top-color: #333; border-bottom: 0; }
.up { border-bottom-color: #333; border-top: 0; }
.lt { border-right-color: #333; border-left: 0; }
.rt { border-left-color: #333; border-right: 0; }
.pale, .off .dn { border-top-color: #888; }

/* title bar */
.title { display: flex; height: 28px; border-bottom: 1px solid #000; background: #d8dbe0; }
.logo {
  flex: 0 0 131px;
  display: flex;
  align-items: center;
  gap: 5px;
  padding-left: 4px;
  border-left: 5px solid #e0261c;
  background: linear-gradient(#3c474e, #1b2127);
}
.ds { width: 20px; height: 20px; }
.brand { color: #fff; font: italic 14px/20px Lato, sans-serif; }
.menu { flex: 0 0 403px; min-width: 0; display: flex; align-items: center; gap: 14px; padding-left: 18px; background: #ababad; white-space: nowrap; border-right: 1px solid #ccc; }
.menu .b { margin-left: auto; margin-right: 3px; }
.quick { display: flex; align-items: center; gap: 7px; padding-left: 6px; flex: 1; }
.dot { color: #906; }
.winbtns { display: flex; align-items: center; gap: 7px; padding-right: 4px; color: #444; }

/* ribbon */
.ribbon { display: flex; height: 77px; padding: 4px 0; border-bottom: 2px solid #16181c; background: #d8dbe0; }
.big { width: 46px; display: flex; flex-direction: column; align-items: center; line-height: 14px; padding-top: 2px; white-space: nowrap; }
.big .i { margin-bottom: 1px; }
.big .dn { margin-top: 10px; }
.big.first { width: 51px; border-right: 1px solid #555; }
.big.mid { padding-top: 9px; }
.big.off { color: #85888c; }
.big.show { width: 54px; border-right: 1px solid #555; }
.big.off:last-child { width: 51px; }
.tools { display: grid; grid-template-columns: repeat(4, 36px); grid-auto-rows: 23px; width: 132px; padding-left: 4px; margin-top: -2px; }
.tool { display: flex; align-items: center; gap: 7px; height: 23px; }
.group { display: flex; width: 275px; padding-left: 2px; border-left: 1px solid #555; border-right: 1px solid #555; }
.list { flex: 1; margin-top: -2px; }
.item { display: flex; align-items: center; gap: 7px; width: 100%; height: 23px; padding: 0 4px 0 2px; }
.item .dn { margin-left: auto; }

/* work area */
.main { display: flex; background: #fff; }
.work { flex: 1; min-width: 0; }
.tabrow { display: flex; justify-content: space-between; height: 20px; }
.tabs { display: flex; height: 19px; }
.tabs a { padding: 0 7px; line-height: 16px; border: solid #222; border-width: 0 2px 2px 0; background: #a9acb2; white-space: nowrap; }
.tabs a:nth-child(2), .tabs a:nth-child(4) { padding: 0 15px; }
.tabs .on { height: 21px; padding: 0 15px; background: #d8dbe0; }
.mdi { display: flex; gap: 7px; padding: 6px 10px 0 0; height: 22px; color: #777; }
.view { display: flex; position: relative; }
.panel { position: relative; flex: 0 0 189px; min-width: 0; display: flex; flex-direction: column; border-right: 2px solid #333; border-top: 1px solid #333; background: #dfe3e8; }
.ptabs { display: flex; align-items: flex-end; height: 31px; border-top: 3px solid #b0b4cc; border-bottom: 1px solid #111; padding-left: 2px; background: #d8dbe0; }
.ptab { width: 28px; height: 21px; display: flex; align-items: center; justify-content: center; border: 1px solid #111; border-bottom: 0; background: #a6a9ae; }
.ptab.on { background: #eceef1; }
.more { margin: 0 2px 3px auto; }
.filter { display: flex; align-items: center; height: 18px; margin: 2px 2px 3px 3px; padding-left: 5px; border: 1px solid #333; background: #eceef0; }
.filter input { flex: 1; min-width: 0; border: 0; background: none; height: 14px; }
.treebox { display: flex; height: 426px; }
.tree { flex: 1; min-width: 0; overflow: hidden; white-space: nowrap; background: repeating-linear-gradient(#555 0 1px, transparent 1px 2px) 31px 0 / 1px 405px no-repeat; }
.kids { margin-left: 69px; background: repeating-linear-gradient(#555 0 1px, transparent 1px 2px) 0 0 / 1px calc(100% - 9px) no-repeat; }
.kids li, .root { position: relative; display: flex; align-items: center; gap: 5px; height: 18px; font-size: 12px; }
.kids li::before { content: ""; width: 6px; border-top: 1px dotted #555; margin-left: 1px; margin-right: -1px; }
.root { margin-left: 31px; gap: 3px; }
.root::before { content: ""; width: 6px; border-top: 1px dotted #555; margin-left: 4px; }
.plus::after {
  content: "";
  position: absolute;
  left: -4px;
  top: 4px;
  width: 9px;
  height: 9px;
  border: 1px solid #888;
  background: linear-gradient(#235, #235) center / 5px 1px no-repeat, linear-gradient(#235, #235) center / 1px 5px no-repeat, #f4f6fa;
}
.vbar { width: 15px; display: flex; flex-direction: column; align-items: center; padding: 8px 0 7px; background: #eeeff1; }
.vthumb { width: 15px; height: 264px; margin: auto 0 8px; display: flex; align-items: center; justify-content: center; border: 1px solid #999; border-radius: 2px; background: linear-gradient(90deg, #f8f8f8, #cbcdd1); }
.grip { width: 7px; height: 8px; background: repeating-linear-gradient(#555 0 1px, transparent 1px 3px); }
.grip.v { width: 8px; height: 7px; background: repeating-linear-gradient(90deg, #555 0 1px, transparent 1px 3px); }
.hbar { display: flex; align-items: center; height: 17px; padding: 0 20px 0 7px; background: #eeeff1; }
.hthumb { width: 124px; height: 15px; margin: 0 auto 0 10px; display: flex; align-items: center; justify-content: center; border: 1px solid #999; border-radius: 2px; background: linear-gradient(#f8f8f8, #cbcdd1); }
.handle { position: absolute; right: -9px; top: 218px; width: 9px; height: 39px; display: flex; flex-direction: column; align-items: center; justify-content: space-evenly; border: 1px solid #222; background: #e6e8ec; }
.canvas { flex: 1; min-width: 0; display: flex; align-items: flex-start; }
.drawing { flex: 1; min-width: 0; }
.tasks { width: 23px; margin-top: 39px; border: 1px solid #222; border-right: 0; }
.tasks button { display: flex; align-items: center; justify-content: center; width: 22px; height: 24px; border-bottom: 1px solid #222; background: #a4a7ac; }
.tasks button:last-child { border-bottom: 0; height: 22px; }
.tasks .on { background: #f2f2f4; }
.marks { position: absolute; left: 0; top: 0; width: 600px; height: 498px; pointer-events: none; }
.sheets { display: flex; height: 15px; border-top: 1px solid #000; background: #e3e6eb; line-height: 13px; }
.navs { display: flex; width: 66px; background: #b9bbbf; }
.navs button { flex: 1; display: flex; align-items: center; justify-content: center; border: 1px solid #9a9ca0; }
.navs .lt { border-right-color: #8a8c90; }
.navs .rt { border-left-color: #8a8c90; }
.bar { width: 1px; height: 7px; background: #8a8c90; }
.sheet { display: flex; align-items: center; width: 33px; border: solid #111; border-width: 0 1px 1px 0; background: #a6a9ae; padding-left: 7px; }
.sheet.on { width: 72px; padding-left: 8px; gap: 1px; border-left-width: 1px; background: #e3e6eb; }
.sheet .i { height: 14px; }

/* right toolbar */
.side { flex: 0 0 47px; padding: 5px 4px 0; border-left: 1px solid #888; border-bottom: 1px solid #888; background: #d8dbe0; }
.side::before { content: ""; display: block; border-top: 2px dotted #444; margin-bottom: 7px; }
.sgroup { padding-bottom: 3px; border-bottom: 1px solid #777; margin-bottom: 4px; }
.side .tool { padding-left: 2px; gap: 10px; }
.expand { transform: rotate(90deg); width: 16px; margin: 16px auto 0; color: #444; }

/* lower toolbars */
.bar1 { display: flex; align-items: center; height: 30px; padding-left: 15px; gap: 7px; background: #d8dbe0; border-bottom: 1px solid #999; position: relative; }
.bar1::before { content: ""; position: absolute; left: 4px; top: 6px; bottom: 6px; border-left: 2px dotted #555; }
.bar2 { border-bottom: 1px solid #222; }
.sep { width: 1px; height: 22px; background: #888; }
.sep.end { height: 28px; margin-left: 4px; }
.pick { display: flex; height: 23px; margin: 0 -2px 0 -3px; border: 1px solid #777; }
.pick button { display: flex; align-items: center; justify-content: center; width: 26px; background: #b4b7bc; border-right: 1px solid #777; }
.pick button:last-child { width: 12px; background: #e4e6ea; border: 0; }
.last { margin-left: auto; padding-right: 8px; color: #555; }
.status { display: flex; align-items: center; height: 25px; padding: 0 8px 0 2px; background: #d8dbe0; white-space: nowrap; }
.status span { flex: none; }
.status .s1 { width: 121px; }
.status .s2 { width: 91px; }
.status .s3 { width: 32px; }
.status .s4 { width: 54px; }
.status .s5 { width: 86px; }
.status .s6 { width: 30px; }
.status .s7 { width: 54px; margin-left: 32px; }
.status .ask { margin-left: 15px; }
.status .tag { margin-left: auto; margin-right: 16px; }
```
